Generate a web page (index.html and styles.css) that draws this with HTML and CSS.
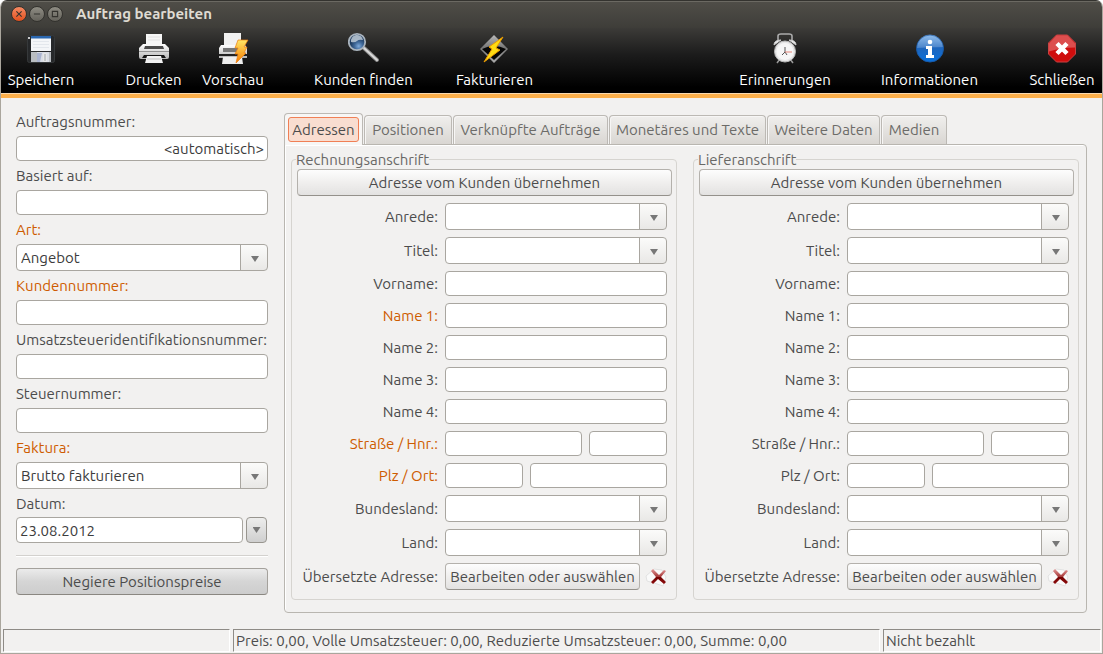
FILE: index.html
```html
<!DOCTYPE html>
<html lang="de">
<head>
<meta charset="utf-8">
<title>Auftrag bearbeiten</title>
<link rel="stylesheet" href="styles.css">
</head>
<body>
<div class="window">
  <header class="titlebar">
    <button class="wm close" type="button" aria-label="Fenster schließen"><svg viewBox="0 0 16 16"><path d="M5 5l6 6M11 5l-6 6"/></svg></button>
    <button class="wm" type="button" aria-label="Minimieren"><svg viewBox="0 0 16 16"><path d="M4.500 8h7"/></svg></button>
    <button class="wm" type="button" aria-label="Maximieren"><svg viewBox="0 0 16 16"><path d="M5 5h6v6H5z"/></svg></button>
    <h1 class="title">Auftrag bearbeiten</h1>
  </header>

  <nav class="toolbar" aria-label="Aktionen">
    <button class="tool w-66" type="button">
      <svg viewBox="0 0 32 32"><rect x="2.500" y="3.500" width="27" height="27" rx="2" fill="#26282a" stroke="#36393b"/><rect x="6" y="4" width="20" height="15" fill="#f4f6f8"/><rect x="6" y="4" width="20" height="2.500" fill="#2a67b0"/><path d="M8 9.500h16M8 12.500h16M8 15.500h16" stroke="#e3e7ec"/><path d="M6 20h20v10H6z" fill="#b9bdc1"/><path d="M12 20h12v10H12z" fill="#d9dde5"/><path d="M12 21h5l-2 9h-3z" fill="#aab4cf"/><path d="M18.500 21.500h3v8h-3z" fill="#c2c6c9" stroke="#e6e6e6"/><rect x="3" y="5" width="2" height="2" fill="#c8c8c8"/></svg>
      <span>Speichern</span></button>
    <span class="space-l"></span>
    <button class="tool w-55" type="button">
      <svg viewBox="0 0 32 32"><defs><linearGradient id="pr" x2="0" y2="1"><stop stop-color="#fff"/><stop offset="1" stop-color="#b5b5b5"/></linearGradient></defs><path d="M8 2h16v12H8z" fill="#f6f6f6"/><path d="M10 5h12M10 8h12" stroke="#e2e2e2"/><path d="M5 12h3v3h16v-3h3l4 4v9q0 2-2 2H3q-2 0-2-2v-9z" fill="url(#pr)"/><path d="M7 14h18l1 3H6z" fill="#4a4a4a"/><path d="M1 19.500h30" stroke="#929292"/><path d="M6 23h20l2 3H4z" fill="#141414"/><path d="M9 24h14l2 7H7z" fill="#f2f2f2"/><path d="M9 27h14" stroke="#bdbdbd"/></svg>
      <span>Drucken</span></button>
    <span class="space-s"></span>
    <button class="tool w-62" type="button">
      <svg viewBox="0 0 32 32"><defs><linearGradient id="bo" x2="0" y2="1"><stop stop-color="#ffe766"/><stop offset="1" stop-color="#f47b00"/></linearGradient></defs><path d="M7 1h17v14H7z" fill="#f1f1f1"/><path d="M4 13h24l2 3v10H2V16z" fill="url(#pr)"/><path d="M6 16h19v4H6z" fill="#777"/><path d="M2 23h28" stroke="#222" stroke-width="2"/><path d="M6 25h19l1 7H5z" fill="#eee"/><path d="M21 8h10l-4 7h3l-3 6h2L19 31l2-9h-3l3-6h-3z" fill="url(#bo)" stroke="#ec7c10" stroke-width=".7"/></svg>
      <span>Vorschau</span></button>
    <span class="space-l"></span>
    <button class="tool w-95" type="button">
      <svg viewBox="1 0 32 32"><defs><radialGradient id="le" cx=".6" cy=".75"><stop stop-color="#7eaadb"/><stop offset=".5" stop-color="#406999"/><stop offset="1" stop-color="#1e3c61"/></radialGradient></defs><path d="M17 16l13 12" stroke="#8d8d8d" stroke-width="4" stroke-linecap="round"/><path d="M17 16l13 12" stroke="#d9d9d9" stroke-width="2" stroke-linecap="round"/><circle cx="10" cy="10" r="8.200" fill="url(#le)" stroke="#a9b3bd" stroke-width="1.800"/><path d="M4 10a6 6 0 0 1 12-2q-4-1-6 1t-6 1z" fill="#c9d5df" opacity=".8"/></svg>
      <span>Kunden finden</span></button>
    <span class="space-m"></span>
    <button class="tool w-77" type="button">
      <svg viewBox="1 0 32 32"><defs><linearGradient id="di" x2="0" y2="1"><stop stop-color="#b9b9b9"/><stop offset=".45" stop-color="#777"/><stop offset="1" stop-color="#aaa"/></linearGradient></defs><path d="M16 3l14 14-14 14L2 17z" fill="url(#di)"/><path d="M4 17q12-6 24 0L16 28z" fill="#050505"/><path d="M25 5L11 15l3 2-8 13 16-12-4-2z" fill="#ffdc12" stroke="#ed9b00"/></svg>
      <span>Fakturieren</span></button>
    <span class="grow"></span>
    <button class="tool w-88" type="button">
      <svg viewBox="0 0 32 32"><path d="M9 9V4q0-2 3-2h8q3 0 3 2v5" fill="none" stroke="#aaa" stroke-width="1.600"/><path d="M5 13q0-5 7-5zM27 13q0-5-7-5z" fill="#eee" stroke="#ccc"/><path d="M11 27l-3 4M21 27l3 4" stroke="#999" stroke-width="1.500"/><circle cx="16" cy="19.500" r="10.500" fill="#e6e6e6" stroke="#b8b8b8"/><circle cx="16" cy="19.500" r="8.500" fill="#f6f6f6"/><path d="M16 20v-5M16 20l-3 3M16 20l2 3" stroke="#555" fill="none"/><path d="M16 20h7" stroke="#e38478"/></svg>
      <span>Erinnerungen</span></button>
    <span class="space-l"></span>
    <button class="tool w-97" type="button">
      <svg viewBox="0 0 32 32"><defs><linearGradient id="in" x2="0" y2="1"><stop stop-color="#78aee8"/><stop offset=".5" stop-color="#1e66bd"/><stop offset="1" stop-color="#0870dc"/></linearGradient></defs><circle cx="16" cy="16.500" r="13.500" fill="url(#in)" stroke="#185bab"/><path d="M3 16a13 13 0 0 1 26-1q-12 0-26 1z" fill="#fff" opacity=".18"/><circle cx="16" cy="10" r="2.300" fill="#fff"/><path d="M12 14h6v9h2v3h-8v-3h2v-6h-2z" fill="#fff"/></svg>
      <span>Informationen</span></button>
    <span class="space-l"></span>
    <button class="tool w-64" type="button">
      <svg viewBox="0 0 32 32"><path d="M10.500 3h11l8 8v11l-8 8h-11l-8-8V11z" fill="#cf0d0d" stroke="#c94242"/><path d="M10.500 3.500h11l7.500 8v4Q16 15.500 3 19.500v-8z" fill="#fff" opacity=".27"/><path d="M11 11.500l10 10M21 11.500l-10 10" stroke="#fff" stroke-width="4.500"/></svg>
      <span>Schließen</span></button>
  </nav>

  <main class="content">
    <form class="side">
      <div class="field"><label for="nr">Auftragsnummer:</label><input class="text right" id="nr" type="text" value="&lt;automatisch&gt;"></div>
      <div class="field"><label for="basis">Basiert auf:</label><input class="text" id="basis" type="text"></div>
      <div class="field"><label class="req" for="art">Art:</label><div class="combo"><select id="art"><option>Angebot</option></select></div></div>
      <div class="field"><label class="req" for="kunde">Kundennummer:</label><input class="text" id="kunde" type="text"></div>
      <div class="field"><label for="ust">Umsatzsteueridentifikationsnummer:</label><input class="text" id="ust" type="text"></div>
      <div class="field"><label for="steuer">Steuernummer:</label><input class="text" id="steuer" type="text"></div>
      <div class="field"><label class="req" for="faktura">Faktura:</label><div class="combo"><select id="faktura"><option>Brutto fakturieren</option></select></div></div>
      <div class="field dated"><label for="datum">Datum:</label><div class="date"><input class="text" id="datum" type="text" value="23.08.2012"><button class="drop" type="button" aria-label="Kalender"></button></div></div>
      <hr class="rule">
      <button class="btn dark" type="button">Negiere Positionspreise</button>
    </form>

    <section class="book">
      <div class="tabs" role="tablist">
        <button class="tab active" role="tab" aria-selected="true" type="button"><span>Adressen</span></button>
        <button class="tab w-88" role="tab" type="button">Positionen</button>
        <button class="tab w-155" role="tab" type="button">Verknüpfte Aufträge</button>
        <button class="tab w-157" role="tab" type="button">Monetäres und Texte</button>
        <button class="tab w-113" role="tab" type="button">Weitere Daten</button>
        <button class="tab w-66" role="tab" type="button">Medien</button>
      </div>
      <div class="panel" role="tabpanel">
        <fieldset class="group">
          <legend>Rechnungsanschrift</legend>
          <button class="btn" type="button">Adresse vom Kunden übernehmen</button>
          <div class="rows">
            <label for="r-anrede">Anrede:</label><div class="combo"><select id="r-anrede"><option></option></select></div>
            <label for="r-titel">Titel:</label><div class="combo"><select id="r-titel"><option></option></select></div>
            <label for="r-vorname">Vorname:</label><input class="text" id="r-vorname" type="text">
            <label class="req" for="r-name1">Name 1:</label><input class="text" id="r-name1" type="text">
            <label for="r-name2">Name 2:</label><input class="text" id="r-name2" type="text">
            <label for="r-name3">Name 3:</label><input class="text" id="r-name3" type="text">
            <label for="r-name4">Name 4:</label><input class="text" id="r-name4" type="text">
            <label class="req" for="r-strasse">Straße / Hnr.:</label><div class="pair"><input class="text long" id="r-strasse" type="text"><input class="text short" type="text" aria-label="Hausnummer"></div>
            <label class="req" for="r-plz">Plz / Ort:</label><div class="pair"><input class="text short" id="r-plz" type="text"><input class="text long" type="text" aria-label="Ort"></div>
            <label for="r-bundesland">Bundesland:</label><div class="combo"><select id="r-bundesland"><option></option></select></div>
            <label for="r-land">Land:</label><div class="combo"><select id="r-land"><option></option></select></div>
            <label for="r-trans">Übersetzte Adresse:</label><div class="translate"><button class="btn" id="r-trans" type="button">Bearbeiten oder auswählen</button><button class="clear" type="button" aria-label="Adresse entfernen"><svg viewBox="0 0 22 22"><defs><linearGradient id="rx" x2="0" y2="1"><stop stop-color="#e59a9a"/><stop offset=".5" stop-color="#a63a3a"/><stop offset=".55" stop-color="#750303"/><stop offset="1" stop-color="#8d0c0c"/></linearGradient></defs><path d="M1 10l8-7 8 1 4 7-3 9-9-3-7-2z" fill="#fafafa" stroke="#e2e2e2"/><path d="M8 3l6 6 5-5 2 1-5 6 5 5-2 2-6-5-5 5-2-2 5-5-5-6z" fill="url(#rx)"/></svg></button></div>
          </div>
        </fieldset>
        <fieldset class="group">
          <legend>Lieferanschrift</legend>
          <button class="btn" type="button">Adresse vom Kunden übernehmen</button>
          <div class="rows">
            <label for="l-anrede">Anrede:</label><div class="combo"><select id="l-anrede"><option></option></select></div>
            <label for="l-titel">Titel:</label><div class="combo"><select id="l-titel"><option></option></select></div>
            <label for="l-vorname">Vorname:</label><input class="text" id="l-vorname" type="text">
            <label for="l-name1">Name 1:</label><input class="text" id="l-name1" type="text">
            <label for="l-name2">Name 2:</label><input class="text" id="l-name2" type="text">
            <label for="l-name3">Name 3:</label><input class="text" id="l-name3" type="text">
            <label for="l-name4">Name 4:</label><input class="text" id="l-name4" type="text">
            <label for="l-strasse">Straße / Hnr.:</label><div class="pair"><input class="text long" id="l-strasse" type="text"><input class="text short" type="text" aria-label="Hausnummer"></div>
            <label for="l-plz">Plz / Ort:</label><div class="pair"><input class="text short" id="l-plz" type="text"><input class="text long" type="text" aria-label="Ort"></div>
            <label for="l-bundesland">Bundesland:</label><div class="combo"><select id="l-bundesland"><option></option></select></div>
            <label for="l-land">Land:</label><div class="combo"><select id="l-land"><option></option></select></div>
            <label for="l-trans">Übersetzte Adresse:</label><div class="translate"><button class="btn" id="l-trans" type="button">Bearbeiten oder auswählen</button><button class="clear" type="button" aria-label="Adresse entfernen"><svg viewBox="0 0 22 22"><path d="M1 10l8-7 8 1 4 7-3 9-9-3-7-2z" fill="#fafafa" stroke="#e2e2e2"/><path d="M8 3l6 6 5-5 2 1-5 6 5 5-2 2-6-5-5 5-2-2 5-5-5-6z" fill="url(#rx)"/></svg></button></div>
          </div>
        </fieldset>
      </div>
    </section>
  </main>

  <footer class="status">
    <div class="cell first"></div>
    <div class="cell">Preis: 0,00, Volle Umsatzsteuer: 0,00, Reduzierte Umsatzsteuer: 0,00, Summe: 0,00</div>
    <div class="cell last">Nicht bezahlt</div>
  </footer>
</div>
</body>
</html>
```
FILE: styles.css
```css
* { box-sizing: border-box; }
body {
  margin: 0;
  background: #fff;
  color: #4c4c4c;
  font: 15px/20px Ubuntu, "Noto Sans", sans-serif;
}
button, input, select { font: inherit; color: inherit; margin: 0; }
.window {
  min-height: 100vh;
  display: flex;
  flex-direction: column;
  background: #f2f1f0;
  border: 1px solid #aaa69d;
  border-top: 0;
  border-radius: 7px 7px 0 0;
  overflow: hidden;
}

/* Title bar */
.titlebar {
  height: 28px;
  display: flex;
  align-items: center;
  gap: 2px;
  padding: 0 10px 1px;
  background: linear-gradient(#504e48, #3e3d39);
  border-top: 1px solid #34332f;
  box-shadow: inset 0 1px #6b6962;
}
.wm {
  width: 16px;
  height: 16px;
  padding: 0;
  border: 1px solid #33322e;
  border-radius: 50%;
  background: linear-gradient(#8e8c83, #64625b);
}
.wm.close { background: linear-gradient(#f58a63, #e2501e); }
.wm svg { display: block; width: 14px; height: 14px; fill: none; stroke: #33322e; stroke-width: 1.3; }
.title { margin: 0 0 0 11px; font-size: 15px; line-height: 20px; color: #dfdbd2; }

/* Toolbar */
.toolbar {
  height: 70px;
  display: flex;
  padding: 4px 8px 0 7px;
  background: linear-gradient(#3c3b38, #1c1c1c 40%, #000 90%);
  border-bottom: 4px solid #fcaf4b;
  box-shadow: inset 0 -1px #f9d9b0;
}
.tool {
  display: flex;
  flex-direction: column;
  align-items: center;
  gap: 6px;
  padding: 0;
  border: 0;
  background: none;
  color: #fff;
  white-space: nowrap;
}
.tool svg { flex: none; width: 32px; height: 32px; }
.w-55 { width: 55px; }
.w-62 { width: 62px; }
.w-64 { width: 64px; }
.w-66 { width: 66px; }
.w-77 { width: 77px; }
.w-88 { width: 88px; }
.w-95 { width: 95px; }
.w-97 { width: 97px; }
.w-113 { width: 113px; }
.w-155 { width: 155px; }
.w-157 { width: 157px; }
.space-s { width: 21px; }
.space-m { width: 45px; }
.space-l { width: 52px; }
.grow { flex: 1; }

/* Main area */
.content {
  flex: 1;
  display: flex;
  gap: 16px;
  padding: 14px 15px 16px;
}
.side { width: 252px; display: flex; flex-direction: column; gap: 5px; }
.field { display: flex; flex-direction: column; gap: 4px; }
.field.dated { gap: 3px; }
label { white-space: nowrap; }
.req { color: #ce5c00; }

.text {
  width: 100%;
  min-width: 0;
  height: 25px;
  padding: 0 3px;
  border: 1px solid #a9a6a0;
  border-radius: 4px;
  background: #fff;
  color: #3c3c3c;
}
.right { text-align: right; }
.combo { position: relative; }
.combo select {
  display: block;
  width: 100%;
  height: 27px;
  padding: 0 30px 0 4px;
  border: 1px solid #a9a6a0;
  border-radius: 4px;
  appearance: none;
  color: #3c3c3c;
  background: linear-gradient(#a9a6a0, #a9a6a0) right 26px top / 1px 100% no-repeat,
    linear-gradient(#fbfbfa, #e9e8e6) right top / 26px 100% no-repeat, #fff;
}
.combo::after, .drop::after {
  content: "";
  width: 8px;
  height: 6px;
  background: #777;
  clip-path: polygon(0 0, 100% 0, 50% 100%);
}
.combo::after { position: absolute; right: 9px; top: 12px; pointer-events: none; }
.date { display: flex; gap: 3px; padding-right: 1px; }
.date .text { flex: 1; height: 26px; }
.drop {
  width: 21px;
  height: 26px;
  padding: 0;
  display: flex;
  align-items: center;
  justify-content: center;
  border: 1px solid #98958f;
  border-radius: 4px;
  background: linear-gradient(#ededec, #cfcfcf);
}
.rule { width: 100%; margin: 7px 0 6px; border: 0; border-top: 1px solid #d3d1ce; border-bottom: 1px solid #fff; }

.btn {
  width: 100%;
  height: 27px;
  padding: 0;
  border: 1px solid #b4b1ac;
  border-bottom-color: #94918b;
  border-radius: 4px;
  background: linear-gradient(#fdfdfd, #f0efee 50%, #e3e2e1);
  white-space: nowrap;
}
.btn.dark { border-color: #a4a19c; border-bottom-color: #8a8781; background: linear-gradient(#ebebeb, #d5d5d5 50%, #cdcdcd); }

/* Tab book */
.book { flex: 1; display: flex; flex-direction: column; }
.tabs { display: flex; align-items: flex-end; gap: 1px; padding-top: 1px; }
.tab {
  height: 29px;
  padding: 0;
  border: 1px solid #bcb9b4;
  border-bottom: 0;
  border-radius: 4px 4px 0 0;
  background: linear-gradient(#f0efed, #d9d6d2);
  box-shadow: inset 1px 1px #f7f6f5;
  color: #6c6b68;
  white-space: nowrap;
}
.tab.active {
  width: 79px;
  height: 32px;
  margin-bottom: -1px;
  padding: 3px 3px 4px;
  background: #f7f6f5;
  color: #4c4c4c;
  z-index: 1;
}
.tab.active span {
  display: block;
  height: 25px;
  line-height: 24px;
  border: 1px solid #f07f55;
  border-radius: 3px;
  background: #f9ddd0;
}
.panel {
  flex: 1;
  display: flex;
  gap: 16px;
  padding: 5px 7px 12px 6px;
  border: 1px solid #b9b6b0;
  border-radius: 0 4px 4px 4px;
  box-shadow: inset 1px 1px #fff;
}
.group {
  flex: 1;
  min-width: 0;
  margin: 0;
  padding: 0 4px 9px 5px;
  border: 1px solid #d6d4d0;
  border-radius: 4px;
}
.group legend { padding: 0; margin-left: -1px; height: 19px; line-height: 19px; color: #696866; }
.rows {
  display: grid;
  grid-template-columns: 1fr 222px;
  gap: 7px;
  padding: 7px 5px 0 0;
  align-items: center;
}
.rows label { justify-self: end; }
.pair { display: flex; gap: 7px; }
.long { flex: 1; }
.short { flex: 0 0 78px; }
.translate { display: flex; justify-content: space-between; align-items: center; }
.translate .btn { flex: none; width: 195px; }
.clear { flex: none; width: 22px; height: 22px; padding: 0; border: 0; background: none; }
.clear svg { display: block; width: 22px; height: 22px; }

/* Status bar */
.status { display: flex; gap: 3px; padding: 0 1px 0 2px; height: 24px; }
.cell {
  flex: 1;
  padding: 1px 2px 0;
  height: 23px;
  border: 1px solid;
  border-color: #8e8b86 #fff #fff #8e8b86;
  white-space: nowrap;
  overflow: hidden;
}
.cell.first { flex: 0 0 227px; }
.cell.last { flex: 0 0 218px; }
```
